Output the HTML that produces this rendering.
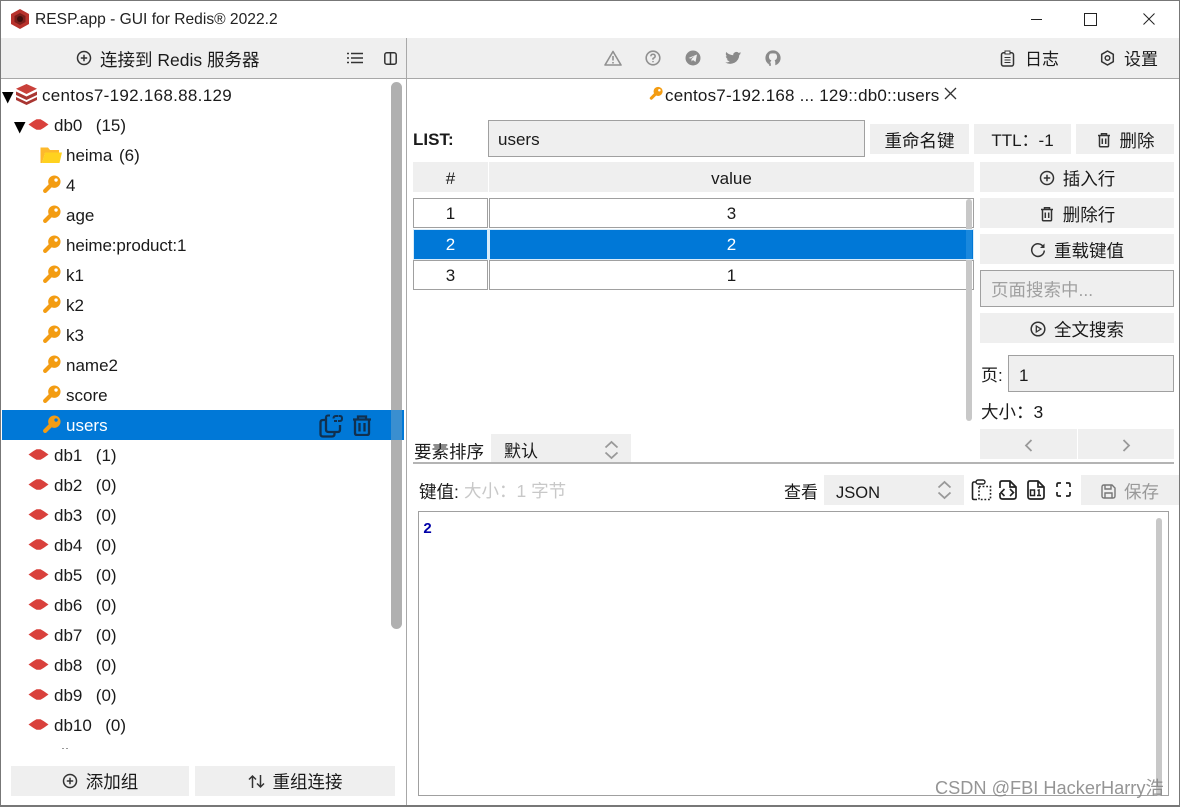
<!DOCTYPE html>
<html lang="zh"><head><meta charset="utf-8"><title>RESP.app</title>
<style>
html,body{margin:0;padding:0;background:#fff}
#app{position:relative;width:1180px;height:807px;overflow:hidden;background:#fff;font-family:"Liberation Sans","Noto Sans CJK SC",sans-serif;font-size:17px;color:#1a1a1a}
#app div,#app svg{position:absolute}
.t{white-space:nowrap;line-height:20px;height:20px}
.z{font-size:17.5px}
.d{word-spacing:2px}
.b{background:#efefef;text-align:center;line-height:34px;height:30px;white-space:nowrap;font-size:17.5px}
.b svg{position:static!important;vertical-align:-1px;margin-right:8px}
.i{background:#efefef;border:1px solid #a0a0a0;box-sizing:border-box}
.c{background:#fff;border:1px solid #a0a0a0;box-sizing:border-box;text-align:center;line-height:29px;height:30px}
.s{background:#0078d7;color:#fff;height:29px;text-align:center;line-height:30px}
.hd{background:#efefef;text-align:center;line-height:33px;height:30px}
</style></head><body><div id="app">
<svg width="0" height="0"><defs>
<symbol id="key" viewBox="0 0 20 20"><path fill-rule="evenodd" d="M13 .5a6.500 6.500 0 1 0 0 13a6.500 6.500 0 1 0 0-13ZM14.800 3.500a1.800 1.800 0 1 1 0 3.600a1.800 1.800 0 1 1 0-3.600Z" fill="#f39c12"/><path d="M9.500 10.500 3.300 16.700" stroke="#f39c12" stroke-width="4.400" stroke-linecap="round"/></symbol>
<symbol id="db" viewBox="0 0 20 11"><polygon points="0,5.500 5,2 8,.3 12,.3 15,2 20,5.500 15,9 12,10.700 8,10.700 5,9" fill="#d9413c"/></symbol>
<symbol id="plus" viewBox="0 0 16 16"><circle cx="8" cy="8" r="6.500" fill="none" stroke="#333" stroke-width="1.500"/><path d="M8 4.800v6.400M4.800 8h6.400" stroke="#333" stroke-width="1.500"/></symbol>
<symbol id="trash" viewBox="0 0 16 16"><path d="M2 3.500h12M5.500 3.500V1.800h5v1.700M3.500 3.500v10.200q0 1 1 1h7q1 0 1-1V3.500M6.300 6.500v5.500M9.700 6.500v5.500" fill="none" stroke="#333" stroke-width="1.500"/></symbol>
</defs></svg>

<!-- window frame -->
<div style="left:0;top:0;width:1180px;height:1px;background:#777"></div>
<div style="left:0;top:0;width:1px;height:807px;background:#777"></div>
<div style="left:1179px;top:0;width:1px;height:807px;background:#777"></div>
<div style="left:0;top:805px;width:1180px;height:2px;background:#777"></div>

<!-- title bar -->
<svg style="left:10px;top:8px" width="20" height="22" viewBox="0 0 20 22"><path d="M10 1 19 6v10l-9 5-9-5V6Z" fill="#b8322c"/><path d="M10 5l5.500 3v6L10 17l-5.500-3V8Z" fill="#7a1f1b"/><circle cx="10" cy="11" r="3" fill="#3f0f0d"/></svg>
<div class="t" style="left:35px;top:10px;font-size:15.600px;color:#222">RESP.app - GUI for Redis® 2022.2</div>
<div style="left:1031px;top:19px;width:11px;height:1px;background:#222"></div>
<div style="left:1084px;top:13px;width:11px;height:11px;border:1px solid #222"></div>
<svg style="left:1143px;top:13px" width="12" height="12"><path d="M.5.5l11 11M11.500.5l-11 11" stroke="#222"/></svg>

<!-- toolbar -->
<div style="left:1px;top:38px;width:1178px;height:40px;background:#efefef"></div>
<div style="left:1px;top:78px;width:1178px;height:1px;background:#a8a8a8"></div>
<div style="left:406px;top:38px;width:1px;height:767px;background:#a8a8a8"></div>
<svg style="left:76px;top:50px" width="16" height="16"><use href="#plus"/></svg>
<div class="t z" style="left:100px;top:49.500px">连接到 Redis 服务器</div>
<svg style="left:347px;top:52px" width="16" height="12"><path d="M0 1.500h2M4 1.500h12M0 6h2M4 6h12M0 10.500h2M4 10.500h12" stroke="#333" stroke-width="1.500"/></svg>
<svg style="left:384px;top:52px" width="13" height="13"><rect x=".8" y=".8" width="11.400" height="11.400" rx="2" fill="none" stroke="#333" stroke-width="1.500"/><path d="M6.500 1v11" stroke="#333" stroke-width="1.500"/></svg>

<svg style="left:604px;top:50px" width="18" height="16"><path d="M9 1.500 17 15H1Z" fill="none" stroke="#909090" stroke-width="1.600" stroke-linejoin="round"/><path d="M9 6v4.500M9 12v1.500" stroke="#909090" stroke-width="1.600"/></svg>
<svg style="left:645px;top:50px" width="16" height="16"><circle cx="8" cy="8" r="6.800" fill="none" stroke="#909090" stroke-width="1.600"/><path d="M5.800 6.300Q6 4.300 8 4.300T10.200 6.200Q10.200 7.400 8 8.500V9.800M8 11v1.300" fill="none" stroke="#909090" stroke-width="1.500"/></svg>
<svg style="left:685px;top:50px" width="16" height="16"><circle cx="8" cy="8" r="7.500" fill="#8a8a8a"/><path d="M3.500 8 12 4.500 10.500 12 8 10l-1.500 1.500V9l3-3-4 2.500Z" fill="#efefef"/></svg>
<svg style="left:725px;top:51px" width="16" height="14" viewBox="0 0 16 14"><path d="M16 2.500 14.300 3Q16 2 15.500 1.200L13.800 2Q12.500.5 10.500 1 8 2 8.200 4.200 4 4 1.200 1 0 3.500 2.200 5.500L.8 5Q1 7.500 3.200 8.200H1.800Q2.500 10 4.800 10.200 3 11.700.2 11.500 5 14 9.500 11.800 14 9.200 14.300 4Z" fill="#8a8a8a"/></svg>
<svg style="left:765px;top:50px" width="16" height="16" viewBox="0 0 16 16"><circle cx="8" cy="8" r="7.600" fill="#8a8a8a"/><path d="M5 3.800Q8 3 11 3.800 13 6.500 11.300 9.300 10 10.300 9.600 10.300 10.300 11 10.300 12.500V16H5.700V14Q3.500 14 2.800 12 4 12.500 5.200 12.800 5.700 11 6.400 10.300 5 10 4.700 9.300 3 6.500 5 3.800Z" fill="#efefef"/><path d="M4.300 13.500Q2.800 13 2.300 11.500L5.700 13V16H4.300Z" fill="#8a8a8a"/></svg>

<svg style="left:1000px;top:50px" width="15" height="17"><rect x="1.500" y="2.800" width="12" height="13.200" rx="2" fill="none" stroke="#333" stroke-width="1.500"/><rect x="5" y="1" width="5" height="3" fill="#fff" stroke="#333"/><path d="M4.500 7.500h6M4.500 10h6M4.500 12.500h6" stroke="#333"/></svg>
<div class="t" style="left:1025px;top:49.500px">日志</div>
<svg style="left:1100px;top:50px" width="15" height="16" viewBox="0 0 15 16"><path d="M7.500 1 13.300 4.300V11.700L7.500 15 1.700 11.700V4.300Z" fill="none" stroke="#333" stroke-width="1.500" stroke-linejoin="round"/><circle cx="7.500" cy="8" r="2.300" fill="none" stroke="#333" stroke-width="1.500"/></svg>
<div class="t" style="left:1124px;top:49.500px">设置</div>

<!-- tree -->
<svg style="left:2px;top:92px" width="12" height="12"><path d="M0 0h11.500L5.700 11.500Z" fill="#000"/></svg>
<svg style="left:16px;top:84px" width="21" height="21" viewBox="0 0 21 21"><path d="M10.500 0 21 4.800 10.500 10 0 4.800Z" fill="#c9403a"/><path d="M0 7.500 10.500 12.500 21 7.500V11L10.500 16 0 11Z" fill="#a93632"/><path d="M0 13 10.500 18 21 13V16L10.500 21 0 16Z" fill="#a93632"/></svg>
<div class="t" style="left:42px;top:86px;letter-spacing:.3px">centos7-192.168.88.129</div>

<svg style="left:14px;top:122px" width="12" height="12"><path d="M0 0h11.500L5.700 11.500Z" fill="#000"/></svg>
<svg style="left:28px;top:119px" width="21" height="11"><use href="#db"/></svg>
<div class="t d" style="left:54px;top:116px">db0&nbsp; (15)</div>

<svg style="left:40px;top:146px" width="22" height="18" viewBox="0 0 22 18"><path d="M.5 17V1.500H8L10 4H19V7H5L2 17" fill="#fdb92c"/><path d="M2 17 5 6.500H22L19.500 17Z" fill="#ffd21f"/></svg>
<div class="t d" style="left:66px;top:146px">heima (6)</div>

<svg style="left:42px;top:175px" width="19" height="19"><use href="#key"/></svg><div class="t" style="left:66px;top:176px">4</div>
<svg style="left:42px;top:205px" width="19" height="19"><use href="#key"/></svg><div class="t" style="left:66px;top:206px">age</div>
<svg style="left:42px;top:235px" width="19" height="19"><use href="#key"/></svg><div class="t" style="left:66px;top:236px;letter-spacing:-.1px">heime:product:1</div>
<svg style="left:42px;top:265px" width="19" height="19"><use href="#key"/></svg><div class="t" style="left:66px;top:266px">k1</div>
<svg style="left:42px;top:295px" width="19" height="19"><use href="#key"/></svg><div class="t" style="left:66px;top:296px">k2</div>
<svg style="left:42px;top:325px" width="19" height="19"><use href="#key"/></svg><div class="t" style="left:66px;top:326px">k3</div>
<svg style="left:42px;top:355px" width="19" height="19"><use href="#key"/></svg><div class="t" style="left:66px;top:356px">name2</div>
<svg style="left:42px;top:385px" width="19" height="19"><use href="#key"/></svg><div class="t" style="left:66px;top:386px">score</div>

<div style="left:391px;top:82px;width:11px;height:547px;background:#b0b0b0;border-radius:6px"></div>
<div style="left:2px;top:410px;width:402px;height:30px;background:#0078d7"></div>
<div style="left:391px;top:410px;width:11px;height:30px;background:#3a8fd0"></div>
<svg style="left:42px;top:415px" width="19" height="19"><use href="#key"/></svg><div class="t" style="left:66px;top:416px;color:#fff">users</div>
<svg style="left:319px;top:414px" width="24" height="24" viewBox="0 0 24 24"><path d="M7 6H4Q1.500 6 1.500 8.500V20Q1.500 22.500 4 22.500H13Q15.500 22.500 15.500 20V18M7 3.500V15.500Q7 18 9.500 18H19Q21 18 21 15.500V11" fill="none" stroke="#10304f" stroke-width="2.300"/><path d="M7 3.500Q7 1.500 9 1.500H11M14.500 4.500Q14.500 2 17 2H19M19.500 2H21Q23 2 23 4.500T21 7H19M15 7H18" fill="none" stroke="#10304f" stroke-width="2"/></svg>
<svg style="left:352px;top:415px" width="20" height="21" viewBox="0 0 20 21"><path d="M1 4.500H19M6 4.500V1.500H14V4.500M3 4.500V18Q3 20 5 20H15Q17 20 17 18V4.500M7.500 8V16.500M12.500 8V16.500" fill="none" stroke="#10304f" stroke-width="2.300"/></svg>

<svg style="left:28px;top:449px" width="21" height="11"><use href="#db"/></svg><div class="t d" style="left:54px;top:446px">db1&nbsp; (1)</div>
<svg style="left:28px;top:479px" width="21" height="11"><use href="#db"/></svg><div class="t d" style="left:54px;top:476px">db2&nbsp; (0)</div>
<svg style="left:28px;top:509px" width="21" height="11"><use href="#db"/></svg><div class="t d" style="left:54px;top:506px">db3&nbsp; (0)</div>
<svg style="left:28px;top:539px" width="21" height="11"><use href="#db"/></svg><div class="t d" style="left:54px;top:536px">db4&nbsp; (0)</div>
<svg style="left:28px;top:569px" width="21" height="11"><use href="#db"/></svg><div class="t d" style="left:54px;top:566px">db5&nbsp; (0)</div>
<svg style="left:28px;top:599px" width="21" height="11"><use href="#db"/></svg><div class="t d" style="left:54px;top:596px">db6&nbsp; (0)</div>
<svg style="left:28px;top:629px" width="21" height="11"><use href="#db"/></svg><div class="t d" style="left:54px;top:626px">db7&nbsp; (0)</div>
<svg style="left:28px;top:659px" width="21" height="11"><use href="#db"/></svg><div class="t d" style="left:54px;top:656px">db8&nbsp; (0)</div>
<svg style="left:28px;top:689px" width="21" height="11"><use href="#db"/></svg><div class="t d" style="left:54px;top:686px">db9&nbsp; (0)</div>
<svg style="left:28px;top:719px" width="21" height="11"><use href="#db"/></svg><div class="t d" style="left:54px;top:716px">db10&nbsp; (0)</div>
<div style="left:62px;top:748px;width:2px;height:1px;background:#999"></div><div style="left:66px;top:748px;width:2px;height:1px;background:#999"></div>

<div class="b" style="left:11px;top:766px;width:178px;line-height:32px"><svg width="16" height="16"><use href="#plus"/></svg>添加组</div>
<div class="b" style="left:195px;top:766px;width:200px;line-height:32px"><svg width="17" height="15" viewBox="0 0 17 15"><path d="M4.500 14V2M1 5.500 4.500 2 8 5.500M12.500 1V13M9 9.500 12.500 13 16 9.500" fill="none" stroke="#333" stroke-width="1.500"/></svg>重组连接</div>

<!-- right: tab -->
<svg style="left:649px;top:86px" width="14" height="15"><use href="#key"/></svg>
<div class="t" style="left:665px;top:86px;letter-spacing:.2px">centos7-192.168 ... 129::db0::users</div>
<svg style="left:944px;top:87px" width="13" height="13"><path d="M1 1l11 11M12 1 1 12" stroke="#333" stroke-width="1.300"/></svg>

<!-- key row -->
<div class="t" style="left:413px;top:130px;font-weight:bold">LIST:</div>
<div class="i" style="left:488px;top:120px;width:377px;height:37px"></div>
<div class="t" style="left:498px;top:130px">users</div>
<div class="b" style="left:870px;top:124px;width:99px">重命名键</div>
<div class="b" style="left:974px;top:124px;width:97px;font-size:17px">TTL：-1</div>
<div class="b" style="left:1076px;top:124px;width:98px"><svg width="16" height="16"><use href="#trash"/></svg>删除</div>

<!-- table -->
<div class="hd" style="left:413px;top:162px;width:75px">#</div>
<div class="hd" style="left:489px;top:162px;width:485px">value</div>
<div class="c" style="left:413px;top:198px;width:75px">1</div>
<div class="c" style="left:489px;top:198px;width:485px">3</div>
<div class="c" style="left:413px;top:260px;width:75px">3</div>
<div class="c" style="left:489px;top:260px;width:485px">1</div>
<div style="left:966px;top:199px;width:6px;height:222px;background:#c8c8c8;border-radius:3px"></div>
<div style="left:413px;top:229px;width:561px;height:31px;background:#d8ecfa"></div>
<div class="s" style="left:414px;top:230px;width:73px">2</div>
<div class="s" style="left:490px;top:230px;width:483px">2</div>
<div style="left:966px;top:230px;width:6px;height:29px;background:#1a88dd"></div>

<!-- side buttons -->
<div class="b" style="left:980px;top:162px;width:194px"><svg width="16" height="16"><use href="#plus"/></svg>插入行</div>
<div class="b" style="left:980px;top:198px;width:194px"><svg width="16" height="16"><use href="#trash"/></svg>删除行</div>
<div class="b" style="left:980px;top:234px;width:194px"><svg width="16" height="16" viewBox="0 0 16 16"><path d="M13.500 5A6.300 6.300 0 1 0 14.300 8.500" fill="none" stroke="#333" stroke-width="1.500"/><path d="M14.500 1.500V6H10Z" fill="#333"/></svg>重载键值</div>
<div class="i" style="left:980px;top:270px;width:194px;height:37px"></div>
<div class="t z" style="left:991px;top:280px;color:#a0a0a0">页面搜索中...</div>
<div class="b" style="left:980px;top:313px;width:194px"><svg width="16" height="16"><circle cx="8" cy="8" r="6.800" fill="none" stroke="#333" stroke-width="1.500"/><path d="M6.300 5 11 8l-4.700 3Z" fill="none" stroke="#333" stroke-width="1.300"/></svg>全文搜索</div>
<div class="t" style="left:981px;top:366px">页:</div>
<div class="i" style="left:1008px;top:355px;width:166px;height:37px"></div>
<div class="t" style="left:1019px;top:366px">1</div>
<div class="t z" style="left:981px;top:402px">大小：3</div>
<div class="b" style="left:980px;top:429px;width:97px"></div>
<div class="b" style="left:1078px;top:429px;width:96px"></div>
<svg style="left:1024px;top:439px" width="9" height="13"><path d="M7.500 1 2 6.500 7.500 12" fill="none" stroke="#999" stroke-width="1.800"/></svg>
<svg style="left:1122px;top:439px" width="9" height="13"><path d="M1.500 1 7 6.500 1.500 12" fill="none" stroke="#999" stroke-width="1.800"/></svg>

<!-- sort -->
<div class="t z" style="left:414px;top:442px">要素排序</div>
<div style="left:491px;top:434px;width:140px;height:28px;background:#efefef"></div>
<div class="t" style="left:504px;top:442px">默认</div>
<svg style="left:604px;top:440px" width="15" height="20"><path d="M1.500 7.500 7.500 2l6 5.500M1.500 12.500l6 5.500 6-5.500" fill="none" stroke="#999" stroke-width="1.800"/></svg>
<div style="left:413px;top:462px;width:761px;height:2px;background:#b4b4b4"></div>

<!-- value -->
<div class="t z" style="left:419px;top:482px">键值:</div>
<div class="t z" style="left:464px;top:481px;color:#c8c8c8">大小：1 字节</div>
<div class="t" style="left:784px;top:483px">查看</div>
<div style="left:824px;top:475px;width:140px;height:30px;background:#efefef"></div>
<div class="t" style="left:836px;top:483px;font-size:16.500px">JSON</div>
<svg style="left:937px;top:480px" width="15" height="20"><path d="M1.500 7.500 7.500 2l6 5.500M1.500 12.500l6 5.500 6-5.500" fill="none" stroke="#999" stroke-width="1.800"/></svg>
<svg style="left:971px;top:479px" width="21" height="22" viewBox="0 0 21 22"><path d="M5 3H3Q1.500 3 1.500 5V19Q1.500 20.500 3 20.500H6" fill="none" stroke="#222" stroke-width="1.600"/><rect x="5" y="1" width="9" height="4" rx="2" fill="#fff" stroke="#222" stroke-width="1.400"/><path d="M8 7.500H19.500V20.500H8Z" fill="none" stroke="#222" stroke-width="1.600" stroke-dasharray="1.800 1.800"/></svg>
<svg style="left:999px;top:480px" width="18" height="20" viewBox="0 0 18 20"><path d="M3 1H11L17 7V16.500Q17 19 14.500 19H3.500Q1 19 1 16.500V13M1 8V3Q1 1 3 1M11 1V7H17" fill="none" stroke="#222" stroke-width="1.700"/><path d="M5.500 9 2 12.500 5.500 16M11 9 14.500 12.500 11 16" fill="none" stroke="#222" stroke-width="1.600"/></svg>
<svg style="left:1027px;top:480px" width="18" height="20" viewBox="0 0 18 20"><path d="M3 1H11L17 7V16.500Q17 19 14.500 19H3.500Q1 19 1 16.500V3Q1 1 3 1M11 1V7H17" fill="none" stroke="#222" stroke-width="1.700"/><rect x="3.500" y="10" width="4" height="5.500" fill="none" stroke="#222" stroke-width="1.500"/><path d="M10.500 10.500 12 10V15.500M10 15.500H14" fill="none" stroke="#222" stroke-width="1.500"/></svg>
<svg style="left:1056px;top:482px" width="15" height="15"><path d="M1 5V2.500Q1 1 2.500 1H5M10 1H12.500Q14 1 14 2.500V5M14 10V12.500Q14 14 12.500 14H10M5 14H2.500Q1 14 1 12.500V10" fill="none" stroke="#222" stroke-width="1.700"/></svg>
<div class="b" style="left:1081px;top:475px;width:98px;color:#999"><svg width="15" height="15" viewBox="0 0 15 15"><path d="M1 3Q1 1 3 1H11L14 4V12Q14 14 12 14H3Q1 14 1 12ZM4 1V5H10V1M4 14V9H11V14" fill="none" stroke="#777" stroke-width="1.400"/></svg>保存</div>

<div style="left:418px;top:511px;width:751px;height:285px;background:#fff;border:1px solid #a0a0a0;box-sizing:border-box"></div>
<div class="t" style="left:423px;top:520px;font-family:'Liberation Mono',monospace;font-weight:bold;font-size:15px;color:#0000a8">2</div>
<div style="left:1156px;top:518px;width:6px;height:278px;background:#c8c8c8;border-radius:3px"></div>

<!-- watermark -->
<div class="t" style="left:935px;top:778px;font-size:18.200px;color:rgba(130,130,130,.85)">CSDN @FBI HackerHarry浩</div>
</div></body></html>
